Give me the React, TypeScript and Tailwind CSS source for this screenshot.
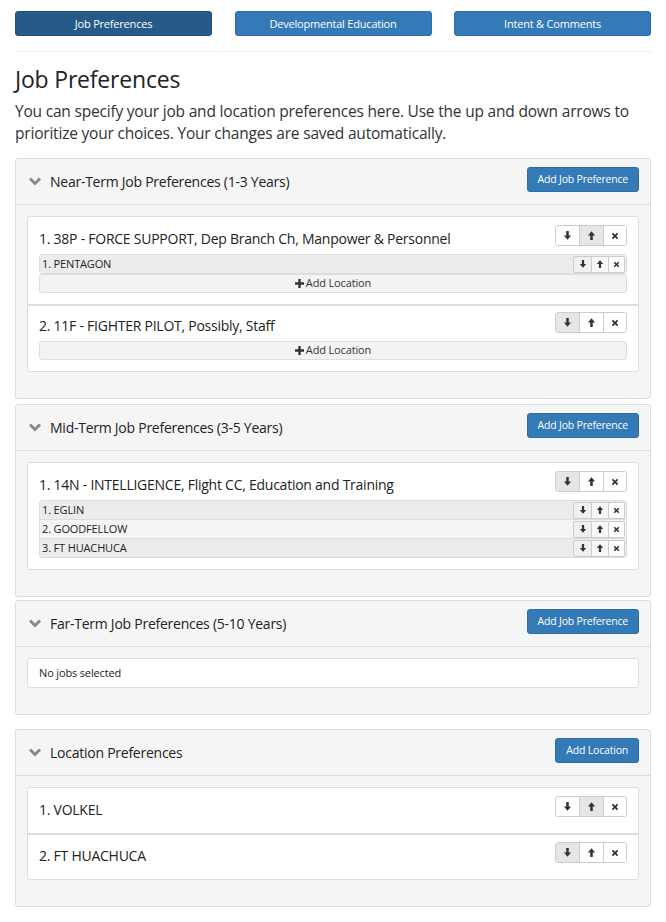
import React from 'react'

type Job = { title: string; locations: string[]; active: string; addRow: boolean }

const jobsNear: Job[] = [
  {
    title: '1. 38P - FORCE SUPPORT, Dep Branch Ch, Manpower & Personnel',
    locations: ['1. PENTAGON'],
    active: 'up',
    addRow: true,
  },
  { title: '2. 11F - FIGHTER PILOT, Possibly, Staff', locations: [], active: 'down', addRow: true },
]

const jobsMid: Job[] = [
  {
    title: '1. 14N - INTELLIGENCE, Flight CC, Education and Training',
    locations: ['1. EGLIN', '2. GOODFELLOW', '3. FT HUACHUCA'],
    active: 'down',
    addRow: false,
  },
]

function ArrowDown({ size = 9 }: { size?: number }) {
  return (
    <svg width={size} height={size} viewBox="0 0 10 10">
      <path d="M3.6 0h2.8v5H9L5 9.6 1 5h2.6z" fill="#333" />
    </svg>
  )
}

function ArrowUp({ size = 9 }: { size?: number }) {
  return (
    <svg width={size} height={size} viewBox="0 0 10 10">
      <path d="M3.6 10h2.8V5H9L5 0.4 1 5h2.6z" fill="#333" />
    </svg>
  )
}

function Remove({ size = 8 }: { size?: number }) {
  return (
    <svg width={size} height={size} viewBox="0 0 10 10">
      <path d="M1 2.6 2.6 1 5 3.4 7.4 1 9 2.6 6.6 5 9 7.4 7.4 9 5 6.6 2.6 9 1 7.4 3.4 5z" fill="#333" />
    </svg>
  )
}

function ButtonGroup({ active }: { active?: string }) {
  return (
    <div className="flex h-[21px] overflow-hidden rounded-[3px] border border-[#ccc]">
      <div
        className={`flex w-[23px] items-center justify-center ${active === 'down' ? 'bg-[#e6e6e6]' : 'bg-white'}`}
      >
        <ArrowDown />
      </div>
      <div
        className={`flex w-[24px] items-center justify-center border-l border-[#ccc] ${active === 'up' ? 'bg-[#e6e6e6]' : 'bg-white'}`}
      >
        <ArrowUp />
      </div>
      <div className="flex w-[23px] items-center justify-center border-l border-[#ccc] bg-white">
        <Remove />
      </div>
    </div>
  )
}

function SmallButtons() {
  return (
    <div className="flex h-[17px] overflow-hidden rounded-[2px] border border-[#ccc]">
      <div className="flex w-[17px] items-center justify-center bg-[#f0f0f0]">
        <ArrowDown size={8} />
      </div>
      <div className="flex w-[17px] items-center justify-center border-l border-[#ccc] bg-[#f7f7f7]">
        <ArrowUp size={8} />
      </div>
      <div className="flex w-[16px] items-center justify-center border-l border-[#ccc] bg-white">
        <Remove size={7} />
      </div>
    </div>
  )
}

function Chevron() {
  return (
    <svg width="14" height="10" viewBox="0 0 14 10">
      <path d="M1 2.5 3 0.6 7 4.6 11 0.6 13 2.5 7 8.5z" fill="#888" />
    </svg>
  )
}

function Panel({
  title,
  action,
  className,
  children,
}: {
  title: string
  action: string
  className?: string
  children: React.ReactNode
}) {
  return (
    <div className={`rounded-[3px] border border-[#ddd] bg-[#f5f5f5] ${className ?? ''}`}>
      <div className="flex h-[46px] items-center justify-between border-b border-[#ddd] pl-[12px] pr-[11px]">
        <div className="flex items-center gap-[8px]">
          <Chevron />
          <span className="text-[14px] tracking-[-0.25px] text-[#222]">{title}</span>
        </div>
        <button className="-mt-[4px] h-[25px] rounded-[3px] border border-[#2e6da4] bg-[#337ab7] px-[10px] text-[10.5px] tracking-[-0.2px] text-white">
          {action}
        </button>
      </div>
      <div className="px-[11px] pb-[26px] pt-[11px]">{children}</div>
    </div>
  )
}

function JobList({ jobs }: { jobs: Job[] }) {
  return (
    <div className="overflow-hidden rounded-[3px] border border-[#ddd] bg-white">
      {jobs.map((job, i) => (
        <div
          key={job.title}
          className={`px-[11px] pb-[11px] ${i > 0 ? 'border-t-2 border-[#ddd] pt-[6px]' : 'pt-[8px]'}`}
        >
          <div className="flex h-[29px] justify-between">
            <div className="mt-[4px] text-[14px] leading-[20px] tracking-[-0.25px] text-[#222]">
              {job.title}
            </div>
            <ButtonGroup active={job.active} />
          </div>
          {job.locations.length > 0 && (
            <div className="overflow-hidden rounded-[3px] border border-[#ddd]">
              {job.locations.map((loc, j) => (
                <div
                  key={loc}
                  className={`flex items-center justify-between pl-[2px] pr-[1px] text-[11px] tracking-[-0.15px] text-[#222] ${j > 0 ? 'h-[19px] border-t border-[#ddd]' : 'h-[18px]'} ${j % 2 === 0 ? 'bg-[#ececec]' : 'bg-[#f4f4f4]'}`}
                >
                  <span>{loc}</span>
                  <SmallButtons />
                </div>
              ))}
            </div>
          )}
          {job.addRow && (
            <div className="flex h-[19px] items-center justify-center gap-[2px] rounded-[3px] border border-[#ddd] bg-[#f3f3f3] text-[11px] tracking-[-0.15px] text-[#333]">
              <svg width="9" height="9" viewBox="0 0 10 10">
                <path d="M3.7 0h2.6v3.7H10v2.6H6.3V10H3.7V6.3H0V3.7h3.7z" fill="#333" />
              </svg>
              Add Location
            </div>
          )}
        </div>
      ))}
    </div>
  )
}

export default function App() {
  return (
    <div className="min-h-[922px] bg-white px-[15px] pb-[14px] pt-[11px] font-['Open_Sans',sans-serif] text-[#333]">
      <div className="flex justify-between">
        <button className="h-[25px] w-[197px] rounded-[3px] border border-[#1f4f7a] bg-[#265a88] pt-[1px] text-[11px] tracking-[-0.2px] text-white">
          Job Preferences
        </button>
        <button className="h-[25px] w-[197px] rounded-[3px] border border-[#2e6da4] bg-[#337ab7] pt-[1px] text-[11px] tracking-[-0.2px] text-white">
          Developmental Education
        </button>
        <button className="h-[25px] w-[197px] rounded-[3px] border border-[#2e6da4] bg-[#337ab7] pt-[1px] text-[11px] tracking-[-0.2px] text-white">
          Intent &amp; Comments
        </button>
      </div>
      <div className="mt-[15px] border-t border-[#eee]" />

      <h1 className="mt-[13px] text-[23px] leading-[28px] tracking-[-0.2px] text-[#222]">
        Job Preferences
      </h1>
      <p className="mt-[7px] text-[15.5px] leading-[22px] tracking-[-0.2px] text-[#333]">
        You can specify your job and location preferences here. Use the up and down arrows to
        prioritize your choices. Your changes are saved automatically.
      </p>

      <Panel title="Near-Term Job Preferences (1-3 Years)" action="Add Job Preference" className="mt-[14px]">
        <JobList jobs={jobsNear} />
      </Panel>

      <Panel title="Mid-Term Job Preferences (3-5 Years)" action="Add Job Preference" className="mt-[5px]">
        <JobList jobs={jobsMid} />
      </Panel>

      <Panel title="Far-Term Job Preferences (5-10 Years)" action="Add Job Preference" className="mt-[3px]">
        <div className="flex h-[30px] items-center rounded-[3px] border border-[#ddd] bg-white px-[11px] text-[11px] tracking-[-0.15px] text-[#222]">
          No jobs selected
        </div>
      </Panel>

      <Panel title="Location Preferences" action="Add Location" className="mt-[14px]">
        <div className="overflow-hidden rounded-[3px] border border-[#ddd] bg-white">
          {[
            { name: '1. VOLKEL', active: 'up' },
            { name: '2. FT HUACHUCA', active: 'down' },
          ].map((loc, i) => (
            <div
              key={loc.name}
              className={`flex justify-between px-[11px] ${i > 0 ? 'h-[46px] border-t-2 border-[#ddd] pt-[7px]' : 'h-[45px] pt-[8px]'}`}
            >
              <div className="mt-[4px] text-[14px] leading-[20px] tracking-[-0.25px] text-[#222]">
                {loc.name}
              </div>
              <ButtonGroup active={loc.active} />
            </div>
          ))}
        </div>
      </Panel>
    </div>
  )
}
